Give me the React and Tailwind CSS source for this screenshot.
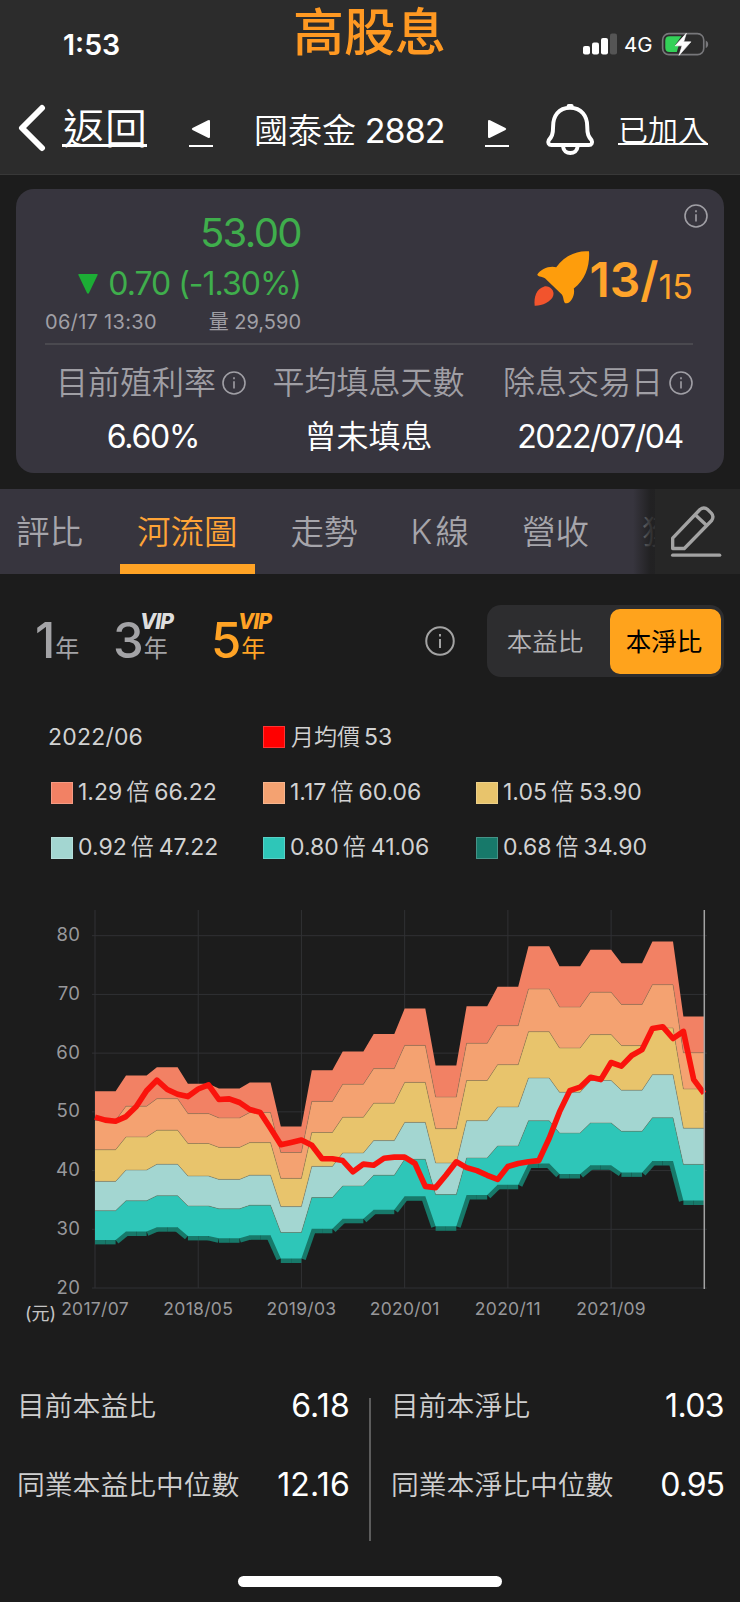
import clsx from 'clsx'

const QUARTERS = [53.5, 56.2, 57.6, 54.8, 54.0, 55.0, 47.5, 57.1, 60.3, 63.25, 67.6, 57.9, 68.0, 71.3, 78.2, 74.8, 77.6, 75.3, 79.0, 66.22]

const PRICES = [
  49.1, 48.6, 48.4, 49.2, 50.9, 53.6, 55.4, 53.8, 53.0, 52.6, 53.9, 54.6,
  52.1, 52.2, 51.6, 50.4, 49.9, 47.2, 44.4, 44.8, 45.2, 44.3, 42.0, 42.0,
  41.7, 39.8, 41.1, 40.9, 42.1, 42.3, 42.3, 41.2, 37.3, 37.1, 39.2, 41.5,
  40.5, 40.0, 39.2, 38.5, 40.7, 41.2, 41.5, 41.7, 45.5, 50.0, 53.6, 54.2,
  55.9, 55.5, 58.4, 57.8, 59.6, 60.6, 64.2, 64.5, 62.5, 63.7, 55.5, 53.15,
]

const BANDS = [
  { ratio: '1.29', value: '66.22', color: '#f28164' },
  { ratio: '1.17', value: '60.06', color: '#f4a271' },
  { ratio: '1.05', value: '53.90', color: '#e8c46c' },
  { ratio: '0.92', value: '47.22', color: '#a3d6d1' },
  { ratio: '0.80', value: '41.06', color: '#2ec6b8' },
  { ratio: '0.68', value: '34.90', color: '#17796a' },
]

const X_LABELS = ['2017/07', '2018/05', '2019/03', '2020/01', '2020/11', '2021/09']
const Y_LABELS = [80, 70, 60, 50, 40, 30, 20]

const TABS = [
  { label: '評比', cls: 'ml-[16px]' },
  { label: '河流圖', cls: 'ml-[37px] px-[17px]', active: true },
  { label: '走勢', cls: 'ml-[36px]' },
  { label: 'K 線', cls: 'ml-[53px] [word-spacing:-6px]' },
  { label: '營收', cls: 'ml-[53px]' },
  { label: '獲利', cls: 'ml-[53px]' },
]

// chart scales, one step per month
const sx = (i) => 95 + i * 10.322
const sy = (v) => 25.7 + (80 - v) * 5.872

function bandPoints(ratio) {
  return PRICES.map((_, i) => [sx(i), sy((QUARTERS[Math.floor(i / 3)] * ratio) / 66.22)])
}

const toPath = (pts) => pts.map(([x, y], i) => `${i ? 'L' : 'M'}${x.toFixed(1)} ${y.toFixed(1)}`).join('')

function InfoIcon({ size = 24, className }) {
  return (
    <svg width={size} height={size} viewBox="0 0 24 24" fill="none" stroke="currentColor" strokeWidth="1.6" className={clsx('shrink-0', className)}>
      <circle cx="12" cy="12" r="11" />
      <path d="M12 10.3v7.2" />
      <path d="M12 6.3v2" />
    </svg>
  )
}

function StatusBar() {
  return (
    <div className="flex h-[85px] items-start text-white">
      <div className="ml-[63px] mt-[26px] w-[230px] text-[28.500px] leading-[37px] font-semibold">1:53</div>
      <div className="mt-[1px] w-[290px] text-[51px] leading-[64px] font-medium text-[#ff9922]">高股息</div>
      <svg className="mt-[33px]" width="34" height="22" viewBox="0 0 34 22" fill="#fff">
        <rect x="0" y="13" width="7" height="8.5" rx="2" />
        <rect x="9" y="9.5" width="7" height="12" rx="2" />
        <rect x="18" y="5" width="7" height="16.5" rx="2" />
        <rect x="27" y="0.5" width="7" height="21" rx="2" fill="#555" />
      </svg>
      <div className="ml-[7px] mt-[32px] w-[30px] text-[20.500px] leading-[26px]">4G</div>
      <svg className="ml-[7px] mt-[32px]" width="49" height="24" viewBox="875 95 147 73">
        <rect x="879" y="100" width="125" height="64" rx="19" fill="none" stroke="#77777a" strokeWidth="5" />
        <path d="M1010 121c10 4 10 19 0 23z" fill="#77777a" />
        <path d="M900 108h36l-20 28h12l-6 20h-22q-13 0-13-13v-22q0-13 13-13z" fill="#33d158" />
        <path d="M951 99l-34 38h21l-9 29 36-41h-22z" fill="#fff" stroke="#fff" strokeWidth="2" strokeLinejoin="round" />
      </svg>
    </div>
  )
}

function NavBar() {
  return (
    <div className="flex h-[89px] items-start text-white">
      <svg className="ml-[18px] mt-[19px]" width="29" height="48" viewBox="0 0 29 48" fill="none" stroke="#fff" strokeWidth="6" strokeLinecap="round" strokeLinejoin="round">
        <path d="M24 4L4 24l20 20" />
      </svg>
      <div className="ml-[15px] mt-[16px] h-[46px] w-[85px] border-b-[3px] border-white pl-px text-[42px] leading-[55px] font-[350]">返回</div>
      <div className="ml-[42px] mt-[34px] flex h-[28px] w-[24px] justify-center border-b-2 border-white">
        <svg width="20" height="20" viewBox="0 0 20 20" fill="#fff"><path d="M1.5 9L17 1.2q2-.8 2 1v15.600q0 1.800-2 1L1.500 11q-1.500-1 0-2z" /></svg>
      </div>
      <div className="ml-[41px] mt-[21px] w-[194px] text-[34px] leading-[50px] tracking-[-0.9px] whitespace-nowrap">
        <span className="font-[350] tracking-normal">國泰金</span> 2882
      </div>
      <div className="ml-[37px] mt-[34px] flex h-[28px] w-[24px] justify-center border-b-2 border-white">
        <svg width="20" height="20" viewBox="0 0 20 20" fill="#fff"><path d="M18.500 9L3 1.200q-2-.8-2 1v15.600q0 1.800 2 1L18.500 11q1.500-1 0-2z" /></svg>
      </div>
      <svg className="ml-[36px] mt-[18px]" width="50" height="53" viewBox="525 310 150 160" fill="none" stroke="#fff" strokeWidth="12" strokeLinecap="round" strokeLinejoin="round">
        <path d="M600 324c-35 0-51 26-51 56 0 25-4 32-13 42-4 8 0 15 8 15h113c8 0 12-7 8-15-9-10-13-17-13-42 0-30-17-56-52-56z" />
        <path d="M596 319h9" />
        <path d="M579 441c2 27 42 27 44 0" />
      </svg>
      <div className="ml-[23px] mt-[23px] h-[37px] w-[90px] border-b-2 border-white text-[30px] leading-[45px] font-[350]">已加入</div>
    </div>
  )
}

function Metric({ label, value, info, className }) {
  return (
    <div className={clsx('flex flex-col items-center', className)}>
      <div className="flex h-[48px] items-center gap-[6px] text-[32px] text-[#a09fa5] font-[350] whitespace-nowrap">
        {label}
        {info && <InfoIcon className="-mt-px" />}
      </div>
      <div className="mt-[6px] h-[46px] text-[32px] leading-[47px] text-white whitespace-nowrap">{value}</div>
    </div>
  )
}

function QuoteCard() {
  return (
    <div className="mx-4 mt-[14px] h-[284px] rounded-[18px] bg-[#37353e] pl-[29px] pr-[31px]">
      <div className="flex h-[156px] justify-between border-b-2 border-[#4a494f]">
        <div className="w-[256px] text-right text-[#3fae4c]">
          <div className="mt-[19px] text-[40px] leading-[50px] tracking-[-1.600px]">53.00</div>
          <div className="mt-[2px] flex h-[48px] items-center justify-end text-[32px] tracking-[-1px] whitespace-nowrap">
            <svg className="mr-[10px]" width="20" height="20" viewBox="0 0 20 20" fill="#1cad35"><path d="M1 0h18q1 0 .6 1l-8.600 18q-1 1.500-2 0L.4 1Q0 0 1 0z" /></svg>
            0.70 (-1.30%)
          </div>
          <div className="flex h-[28px] items-center justify-between text-[20px] text-[#a09fa5]">
            <span className="tracking-[0.3px]">06/17 13:30</span>
            <span>量 29,590</span>
          </div>
        </div>
        <div className="flex flex-col items-end">
          <InfoIcon className="-mr-[15px] mt-[15px] text-[#a09fa5]" />
          <div className="mt-[17px] flex h-[80px] items-start text-[#ffa42b]">
            <svg className="mt-[4px]" width="58" height="58" viewBox="490 205 175 175">
              <path fill="#fe9d0c" d="M659 212C662 250 650 298 613 324C618 345 604 368 592 369C580 370 584 350 577 342L530 297C524 288 503 290 503 282C512 266 540 254 560 260C585 225 625 208 659 212Z" />
              <path fill="#f2542d" d="M524 318C540 315 556 330 551 346C545 365 515 377 495 376C492 350 500 325 524 318Z" />
            </svg>
            <span className="-ml-[2px] mt-[7px] text-[48px] leading-[56px] font-semibold">13/</span>
            <span className="mt-[21px] text-[34px] leading-[42px]">15</span>
          </div>
        </div>
      </div>
      <div className="flex pt-[14px]">
        <Metric label="目前殖利率" value={<span className="relative left-[2px] tracking-[-1.200px]">6.60%</span>} info className="w-[212px]" />
        <Metric label="平均填息天數" value={<span className="font-[350]">曾未填息</span>} className="ml-px w-[221px]" />
        <Metric label="除息交易日" value={<span className="relative left-[2px] tracking-[-1.500px]">2022/07/04</span>} info className="ml-[24px] w-[190px]" />
      </div>
    </div>
  )
}

function TabBar() {
  return (
    <div className="mt-4 flex h-[85px] bg-[#37353e]">
      <div className="relative flex w-[655px] overflow-hidden">
        {TABS.map((t) => (
          <div
            key={t.label}
            className={clsx(
              'h-full shrink-0 text-[33.500px] leading-[86px] font-[350] whitespace-nowrap',
              t.active ? 'border-b-[10px] border-[#ffa325] text-[#ffa437]' : 'text-[#a6a5ab]',
              t.cls,
            )}
          >
            {t.label}
          </div>
        ))}
        <div className="absolute inset-y-0 right-0 w-[22px] bg-linear-to-r from-transparent to-[#1e1e1e]/85 to-80%" />
      </div>
      <div className="flex flex-1 items-center justify-center bg-[#262626]">
        <svg className="-ml-[2px]" width="55" height="57" viewBox="900 70 165 170" fill="none" stroke="#a3a3a3" strokeWidth="10" strokeLinecap="round" strokeLinejoin="round">
          <path d="M911 206v-31l82-86q12-10 24 1l10 10q9 10 1 22l-82 84z" />
          <path d="M981 107l29 27" />
          <path d="M911 226h141" />
        </svg>
      </div>
    </div>
  )
}

function YearButton({ n, vip, active, className }) {
  return (
    <div className={clsx('relative flex h-[60px] items-start', active ? 'text-[#ffa325]' : 'text-[#a3a3a6]', className)}>
      <span className="text-[49px] leading-[60px] font-medium">{n}</span>
      <span className="mt-[22px] text-[24px] leading-[32px]">年</span>
      {vip && (
        <span className={clsx('absolute top-[-1px] left-[27px] text-[21px] leading-[24px] font-extrabold italic tracking-[-1px]', !active && 'text-[#dedede]')}>VIP</span>
      )}
    </div>
  )
}

function RangeRow() {
  return (
    <div className="flex h-[72px] mt-[31px]">
      <div className="flex pt-[6px]">
        <YearButton n="1" className="ml-[35px] w-[78px]" />
        <YearButton n="3" vip className="w-[98px]" />
        <YearButton n="5" vip active className="w-[214px]" />
      </div>
      <InfoIcon size={30} className="mt-[21px] text-[#a3a3a3]" />
      <div className="ml-[32px] flex h-[72px] w-[237px] rounded-[14px] bg-[#2d2d2f] p-1 text-[25.500px]">
        <div className="flex-1 pr-[11px] text-center leading-[66px] font-[350] text-[#b4b4b6]">本益比</div>
        <div className="mr-[-1px] h-[65px] w-[111px] rounded-[10px] bg-[#ffa31c] pr-[3px] text-center leading-[66px] text-black">本淨比</div>
      </div>
    </div>
  )
}

function Swatch({ color }) {
  return <span className="mr-[5px] size-[22px] shrink-0 border border-white/20" style={{ background: color }} />
}

function Legend() {
  return (
    <div className="mt-[32px] grid grid-cols-[212px_213px_1fr] pl-[51px] text-[23px] text-[#d2d2d2] whitespace-nowrap">
      <div className="-ml-[3px] flex h-[56px] items-center tracking-[0.2px]">2022/06</div>
      <div className="col-span-2 flex h-[56px] items-center">
        <Swatch color="#ff0000" />
        <span className="ml-px font-[350]">月均價</span>
        <span className="ml-[4px]">53</span>
      </div>
      {BANDS.map((b) => (
        <div key={b.ratio} className="flex h-[55px] items-center">
          <Swatch color={b.color} />
          {b.ratio}
          <span className="ml-[4px] mr-[5px] font-[350]">倍</span>
          {b.value}
        </div>
      ))}
    </div>
  )
}

function RiverChart() {
  const lowest = bandPoints(34.9)
  return (
    <svg className="mt-[35px] block" width="740" height="420" viewBox="0 0 740 420">
      {/* Grid */}
      <g stroke="#303134" strokeWidth="1">
        {Y_LABELS.map((v) => <line key={v} x1="92" x2="707" y1={sy(v)} y2={sy(v)} />)}
        {X_LABELS.map((l, i) => <line key={l} x1={sx(i * 10)} x2={sx(i * 10)} y1="0" y2="378" />)}
      </g>

      {/* Lower edge of the river, a separate stroke for every month */}
      {lowest.slice(1).map((p, i) => (
        <path key={i} d={toPath([lowest[i], p])} stroke={BANDS[5].color} strokeWidth="9" fill="none" />
      ))}

      {/* Bands, from the top down */}
      {BANDS.slice(0, 5).map((b, i) => {
        const top = bandPoints(Number(b.value))
        const bottom = bandPoints(Number(BANDS[i + 1].value))
        return (
          <g key={b.ratio}>
            <path d={`${toPath([...top, ...bottom.reverse()])}Z`} fill={b.color} />
            {i > 0 && <path d={toPath(top)} fill="none" stroke="#80735a" strokeOpacity="0.6" strokeWidth="0.7" />}
          </g>
        )
      })}

      <path d={toPath(PRICES.map((v, i) => [sx(i), sy(v)]))} fill="none" stroke="#fa130c" strokeWidth="5.600" strokeLinejoin="round" />
      <line x1="704.300" x2="704.300" y1="0" y2="379" stroke="#a3a3a3" strokeWidth="1.500" />

      {/* Axis labels */}
      <g fill="#98989b" fontSize="18.500" letterSpacing="0.500">
        {Y_LABELS.map((v) => <text key={v} x="80.500" y={sy(v) + 5.500} textAnchor="end">{v}</text>)}
      </g>
      <g fill="#98989b" fontSize="17.500" letterSpacing="0.300">
        {X_LABELS.map((l, i) => <text key={l} x={sx(i * 10)} y="405" textAnchor="middle">{l}</text>)}
      </g>
      <text x="25" y="409.500" fill="#c4c4c4" fontSize="18">(元)</text>
    </svg>
  )
}

function Stat({ label, value, className }) {
  return (
    <div className="flex h-[79px] items-start justify-between">
      <span className="text-[27.800px] leading-[43px] font-[350] text-[#cfcfcf] whitespace-nowrap">{label}</span>
      <span className={clsx('text-[32px] leading-[41px] text-white', className)}>{value}</span>
    </div>
  )
}

export default function App() {
  return (
    <div className="h-[1602px] w-[740px] overflow-hidden bg-[#1c1c1c] font-[Inter,'Noto_Sans_CJK_TC',sans-serif]">
      <div className="h-[175px] border-b border-[#383838] bg-[#2c2c2c]">
        <StatusBar />
        <NavBar />
      </div>
      <QuoteCard />
      <TabBar />
      <RangeRow />
      <Legend />
      <RiverChart />
      <div className="mt-[55px] flex pl-[17px] pr-[16px]">
        <div className="w-[333px]">
          <Stat label="目前本益比" value="6.18" className="tracking-[0.2px]" />
          <Stat label="同業本益比中位數" value="12.16" className="tracking-[0.2px]" />
        </div>
        <div className="ml-[19px] mt-[13px] h-[143px] w-[2px] bg-[#5c5c5c]" />
        <div className="ml-[20px] flex-1">
          <Stat label="目前本淨比" value="1.03" className="tracking-[-0.6px]" />
          <Stat label="同業本淨比中位數" value="0.95" className="tracking-[-1px]" />
        </div>
      </div>
      <div className="mx-auto mt-[33px] h-[11px] w-[264px] rounded-full bg-white" />
    </div>
  )
}
